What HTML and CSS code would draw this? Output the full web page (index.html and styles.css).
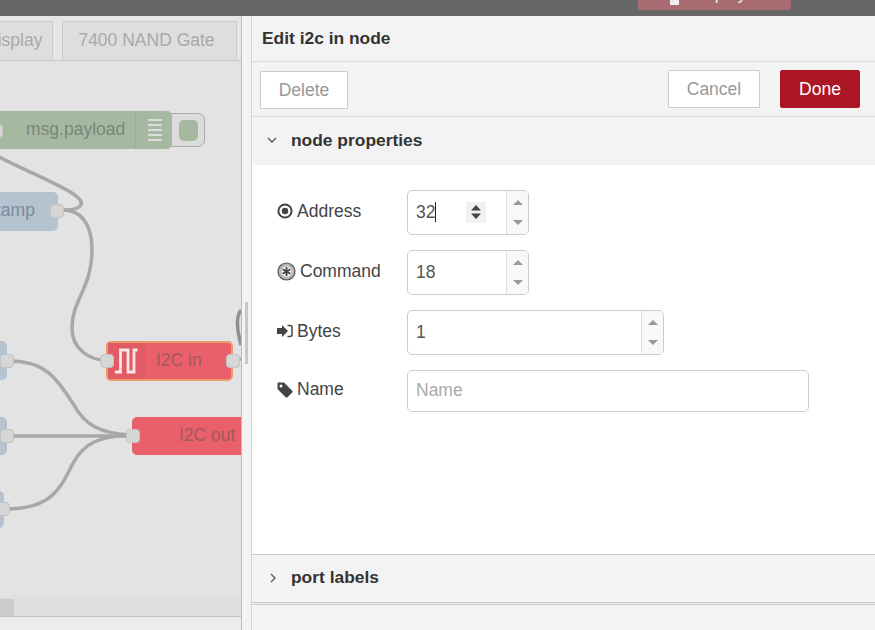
FILE: index.html
```html
<!DOCTYPE html>
<html>
<head>
<meta charset="utf-8">
<title>Edit i2c in node</title>
<link rel="stylesheet" href="styles.css">
</head>
<body>
<div class="topbar">
    <div class="deploy"><span class="deploy-icon"></span><span class="deploy-text">Deploy</span></div>
</div>
<div class="main">
    <div class="workspace">
        <div class="tabs">
            <div class="tab tab-cut">Display</div>
            <div class="tab tab-nand">7400 NAND Gate</div>
        </div>
        <div class="canvas">
            <svg class="wires" width="241" height="536" viewBox="0 61 241 536">
                <path d="M-10 152C20 170 92 195 80 206C76 211 64 210 58 210"/>
                <path d="M58 210C84 208 92 228 92 250C92 288 72 300 72 328C72 350 90 360 106 360"/>
                <path d="M10 361C50 361 60 385 74 405C84 424 100 434 132 435"/>
                <path d="M10 436L132 436"/>
                <path d="M6 509C50 509 60 490 72 465C84 442 100 436 132 435"/>
                <path class="wire-dark" d="M241 310C236 316 237 330 241 345"/>
                <path d="M233 360L241 359"/>
            </svg>

            <div class="node node-debug">
                <span class="node-label">msg.payload</span>
                <span class="node-icon">
                    <svg width="14" height="23" viewBox="0 0 14 23"><path d="M0 2H14M0 7H14M0 12H14M0 17H14M0 22H14"/></svg>
                </span>
            </div>
            <div class="debug-toggle"><span></span></div>
            <div class="port port-debug"></div>

            <div class="node node-inject node-stamp"><span>tamp</span></div>
            <div class="port port-stamp"></div>

            <div class="node node-inject node-left1"></div>
            <div class="port port-left1"></div>
            <div class="node node-inject node-left2"></div>
            <div class="port port-left2"></div>
            <div class="node node-inject node-left3"></div>
            <div class="port port-left3"></div>

            <div class="node node-i2c node-i2c-in">
                <span class="i2c-icon">
                    <svg width="24" height="26" viewBox="0 0 24 26"><path d="M0 24H5.500V2H13V24H19V2H22.500"/></svg>
                </span>
                <span class="i2c-label">I2C in</span>
            </div>
            <div class="port port-in-l"></div>
            <div class="port port-in-r"></div>

            <div class="node node-i2c node-i2c-out"><span class="i2c-out-label">I2C out</span></div>
            <div class="port port-out"></div>
        </div>
        <div class="hscroll"><div class="hscroll-thumb"></div></div>
        <div class="statusbar"></div>
    </div>

    <div class="sash"><div class="sash-handle"></div></div>

    <div class="tray">
        <div class="tray-title">Edit i2c in node</div>
        <div class="tray-toolbar">
            <button class="btn btn-delete">Delete</button>
            <div class="tray-actions">
                <button class="btn btn-cancel">Cancel</button>
                <button class="btn btn-done">Done</button>
            </div>
        </div>
        <div class="section-head">
            <svg class="chevron" width="10" height="10" viewBox="0 0 10 10"><path d="M1 3L5 7L9 3"/></svg>
            <span>node properties</span>
        </div>
        <div class="form">
            <div class="form-row">
                <label class="form-label">
                    <svg class="icon" width="16" height="16" viewBox="0 0 16 16"><circle cx="8" cy="8" r="6.600" class="ring"/><circle cx="8" cy="8" r="3.200"/></svg>
                    Address
                </label>
                <div class="spinner spinner-short">
                    <div class="spinner-value">32<span class="caret"></span></div>
                    <div class="native-spin">
                        <svg width="12" height="16" viewBox="0 0 12 16"><path d="M6 1L11 6.500H1ZM6 15L1 9.500H11Z"/></svg>
                    </div>
                    <div class="spinner-btns"><span class="up"></span><span class="down"></span></div>
                </div>
            </div>
            <div class="form-row">
                <label class="form-label">
                    <svg class="icon icon-wide" width="19" height="19" viewBox="0 0 19 19">
                        <circle cx="9.500" cy="9.500" r="8.500" class="ring-thin"/>
                        <circle cx="9.500" cy="9.500" r="5.300" class="ring-pale"/>
                        <path class="spokes" d="M9.500 5V14M5.600 7.200L13.400 11.800M5.600 11.800L13.400 7.200"/>
                    </svg>
                    Command
                </label>
                <div class="spinner spinner-short">
                    <div class="spinner-value">18</div>
                    <div class="spinner-btns"><span class="up"></span><span class="down"></span></div>
                </div>
            </div>
            <div class="form-row">
                <label class="form-label">
                    <svg class="icon" width="16" height="16" viewBox="0 0 16 16">
                        <path d="M0 5H5V2L11 8L5 14V11H0Z"/>
                        <path class="bracket" d="M10.500 2.500H13C14 2.500 15 3.200 15 4.200V11.800C15 12.800 14 13.500 13 13.500H10.500"/>
                    </svg>
                    Bytes
                </label>
                <div class="spinner spinner-mid">
                    <div class="spinner-value">1</div>
                    <div class="spinner-btns"><span class="up"></span><span class="down"></span></div>
                </div>
            </div>
            <div class="form-row form-row-name">
                <label class="form-label">
                    <svg class="icon" width="16" height="16" viewBox="0 0 16 16"><path fill-rule="evenodd" d="M0.500 1.700C0.500 1 1 0.500 1.700 0.500H7L15.200 8.700C15.700 9.200 15.700 10 15.200 10.500L10.500 15.200C10 15.700 9.200 15.700 8.700 15.200L0.500 7ZM4 2.500A1.500 1.500 0 1 0 4 5.500A1.500 1.500 0 1 0 4 2.500Z"/></svg>
                    Name
                </label>
                <input class="text-input" type="text" placeholder="Name">
            </div>
        </div>
        <div class="section-head section-ports">
            <svg class="chevron" width="10" height="10" viewBox="0 0 10 10"><path d="M3 1L7 5L3 9"/></svg>
            <span>port labels</span>
        </div>
        <div class="tray-foot"></div>
    </div>
</div>
</body>
</html>
```

FILE: styles.css
```css
* {
    box-sizing: border-box;
}

body {
    margin: 0;
    width: 875px;
    height: 630px;
    overflow: hidden;
    font-family: "Liberation Sans", Arial, sans-serif;
    font-size: 17.5px;
    color: #444;
    background-color: #f3f3f3;
}

/* header */
.topbar {
    height: 16px;
    background-color: #666;
    display: flex;
    justify-content: flex-end;
    padding-right: 84px;
}

.deploy {
    width: 153px;
    height: 10px;
    background-color: #a96b72;
    border-radius: 0 0 2px 2px;
    overflow: hidden;
    display: flex;
    padding-left: 32px;
    gap: 14px;
}

.deploy-icon {
    width: 9px;
    height: 5px;
    background-color: #eee;
}

.deploy-text {
    color: #eee;
    font-size: 17px;
    line-height: 10px;
    margin-top: -10px;
}

.main {
    display: flex;
    height: 614px;
}

/* left side */
.workspace {
    width: 242px;
    display: flex;
    flex-direction: column;
    background-color: #e3e3e3;
    border-right: 1px solid #bbb;
    overflow: hidden;
}

.tabs {
    height: 45px;
    padding-top: 5px;
    display: flex;
    gap: 9px;
    background-color: #e6e6e6;
    border-bottom: 1px solid #c4c4c4;
}

.tab {
    width: 175px;
    flex: none;
    background-color: #dedede;
    border: 1px solid #cbcbcb;
    border-bottom: none;
    color: #a9a9a9;
    text-align: center;
    line-height: 37px;
}

.tab-nand {
    padding-right: 6px;
}

.tab-cut {
    width: 83px;
    margin-left: -30px;
    text-align: left;
    padding-left: 14px;
}

.canvas {
    position: relative;
    height: 536px;
    overflow: hidden;
}

.wires {
    position: absolute;
    left: 0;
    top: 0;
}

.wires path {
    fill: none;
    stroke: #a8a8a8;
    stroke-width: 3.500;
}

.wires .wire-dark {
    stroke: #8f8f8f;
}

.node {
    position: absolute;
    border-radius: 5px;
}

.node-debug {
    left: -20px;
    top: 50px;
    width: 192px;
    height: 38px;
    background-color: #a5b9a1;
    display: flex;
}

.node-label {
    color: #7c867b;
    width: 155px;
    padding-left: 46px;
    line-height: 36px;
}

.node-icon {
    flex: 1;
    border-left: 1px solid #9aae97;
    padding: 7px 0 0 12px;
}

.node-icon path {
    stroke: #ddd;
    stroke-width: 2;
    fill: none;
}

.debug-toggle {
    position: absolute;
    left: 165px;
    top: 52px;
    width: 40px;
    height: 34px;
    padding: 6px 6px 5px 13px;
    background-color: #dcdcdc;
    border: 1px solid #ababab;
    border-radius: 7px;
}

.debug-toggle span {
    display: block;
    height: 21px;
    background-color: #a5b9a1;
    border-radius: 5px;
}

.node-debug,
.port-debug {
    z-index: 1;
}

.node-inject {
    background-color: #b5c2d0;
}

.node-stamp {
    left: -30px;
    top: 131px;
    width: 88px;
    height: 39px;
    color: #7f8a96;
    line-height: 36px;
    padding-left: 26px;
}

.node-left1 {
    left: -20px;
    top: 280px;
    width: 27px;
    height: 39px;
}

.node-left2 {
    left: -20px;
    top: 356px;
    width: 27px;
    height: 38px;
}

.node-left3 {
    left: -20px;
    top: 430px;
    width: 24px;
    height: 37px;
}

.node-i2c {
    background-color: #e9606a;
    color: #a0595e;
}

.node-i2c-in {
    left: 106px;
    top: 280px;
    width: 127px;
    height: 40px;
    border: 2px solid #eb9c6b;
    display: flex;
    align-items: center;
}

.i2c-icon {
    width: 37px;
    height: 36px;
    flex: none;
    background-color: #e25a64;
    padding: 5px 0 0 7px;
}

.i2c-icon path {
    fill: none;
    stroke: #f4e8e8;
    stroke-width: 2.800;
}

.i2c-label {
    padding-left: 11px;
    margin-bottom: 2px;
}

.node-i2c-out {
    left: 132px;
    top: 356px;
    width: 130px;
    height: 38px;
    line-height: 36px;
    padding-left: 47px;
}

.port {
    position: absolute;
    width: 14px;
    height: 14px;
    background-color: #d6d6d6;
    border: 1px solid #c4c4c4;
    border-radius: 4px;
}

.port-debug {
    left: -11px;
    top: 63px;
}

.port-stamp {
    left: 50px;
    top: 143px;
}

.port-left1 {
    left: 0;
    top: 293px;
}

.port-left2 {
    left: 0;
    top: 368px;
}

.port-left3 {
    left: -4px;
    top: 441px;
}

.port-in-l {
    left: 100px;
    top: 293px;
}

.port-in-r {
    left: 226px;
    top: 293px;
}

.port-out {
    left: 126px;
    top: 368px;
}

.hscroll {
    height: 20px;
    background-color: #dfdfdf;
    border-bottom: 1px solid #c4c4c4;
    padding-top: 2px;
}

.hscroll-thumb {
    width: 14px;
    height: 17px;
    background-color: #cbcbcb;
}

.statusbar {
    flex: 1;
    background-color: #ececec;
}

.sash {
    width: 9px;
    padding: 286px 0 0 3px;
    background-color: #f3f3f3;
}

.sash-handle {
    width: 3px;
    height: 62px;
    background-color: #c8c8c8;
}

/* edit tray */
.tray {
    flex: 1;
    display: flex;
    flex-direction: column;
    border-left: 1px solid #d4d4d4;
    color: #333;
}

.tray-title {
    height: 46px;
    padding-left: 10px;
    font-size: 17.400px;
    font-weight: bold;
    line-height: 44px;
    border-bottom: 1px solid #ddd;
}

.tray-toolbar {
    height: 55px;
    display: flex;
    justify-content: space-between;
    padding: 8px 15px 0 8px;
    border-bottom: 1px solid #ddd;
}

.tray-actions {
    display: flex;
    gap: 20px;
}

.btn {
    height: 38px;
    font-family: inherit;
    font-size: 17.500px;
    background-color: #fff;
    color: #999;
    border: 1px solid #ccc;
    border-radius: 1px;
    padding: 0;
}

.btn-delete {
    width: 88px;
    margin-top: 1px;
}

.btn-cancel {
    width: 92px;
}

.btn-done {
    width: 80px;
    background-color: #ad1625;
    border-color: #ad1625;
    color: #fff;
    border-radius: 2px;
}

.section-head {
    height: 48px;
    flex: none;
    display: flex;
    align-items: center;
    padding-left: 15px;
    font-size: 17.400px;
    font-weight: bold;
    padding-bottom: 2px;
}

.section-head span {
    margin-left: 14px;
}

.chevron path {
    fill: none;
    stroke: #555;
    stroke-width: 1.300;
}

.form {
    height: 390px;
    flex: none;
    background-color: #fff;
    border-bottom: 1px solid #ccc;
    padding: 25px 0 0 25px;
}

.form-row {
    display: flex;
    height: 45px;
    margin-bottom: 15px;
}

.form-row-name {
    height: 42px;
}

.form-label {
    width: 130px;
    flex: none;
    display: flex;
    align-items: center;
    margin-bottom: 3px;
    color: #444;
}

.icon {
    flex: none;
    margin-right: 4px;
    fill: #444;
}

.icon .ring {
    fill: none;
    stroke: #444;
    stroke-width: 2;
}

.icon .ring-thin {
    fill: #b4b4b4;
    stroke: #555;
    stroke-width: 1.200;
}

.icon .ring-pale {
    fill: #f2f2f2;
    stroke: none;
}

.icon .spokes {
    fill: none;
    stroke: #444;
    stroke-width: 1.800;
}

.icon .bracket {
    fill: none;
    stroke: #444;
    stroke-width: 1.500;
}

.spinner {
    position: relative;
    display: flex;
    border: 1px solid #ccc;
    border-radius: 5px;
    overflow: hidden;
    background-color: #fff;
}

.spinner-short {
    width: 122px;
}

.spinner-mid {
    width: 257px;
}

.spinner-value {
    flex: 1;
    padding-left: 8px;
    line-height: 43px;
    color: #555;
}

.caret {
    display: inline-block;
    width: 1px;
    height: 20px;
    background-color: #222;
    vertical-align: -4px;
}

.native-spin {
    position: absolute;
    left: 58px;
    top: 11px;
    width: 20px;
    height: 21px;
    background-color: #f1f1f1;
    padding: 2px 0 0 4px;
}

.native-spin path {
    fill: #444;
}

.spinner-btns {
    width: 22px;
    flex: none;
    display: flex;
    flex-direction: column;
    align-items: center;
    justify-content: space-between;
    padding: 9px 0;
    background-color: #f8f8f8;
    border-left: 1px solid #ddd;
}

.up,
.down {
    width: 0;
    height: 0;
    border-left: 5px solid transparent;
    border-right: 5px solid transparent;
}

.up {
    border-bottom: 5px solid #999;
}

.down {
    border-top: 5px solid #999;
}

.text-input {
    width: 402px;
    height: 42px;
    font-family: inherit;
    font-size: 17.500px;
    padding: 0 8px 2px;
    border: 1px solid #ccc;
    border-radius: 5px;
    outline: none;
}

.text-input::placeholder {
    color: #aaa;
}

.section-ports {
    border-bottom: 3px double #c8c8c8;
    height: 50px;
    padding-left: 16px;
}

.section-ports span {
    margin-left: 13px;
}

.tray-foot {
    flex: 1;
}
```
